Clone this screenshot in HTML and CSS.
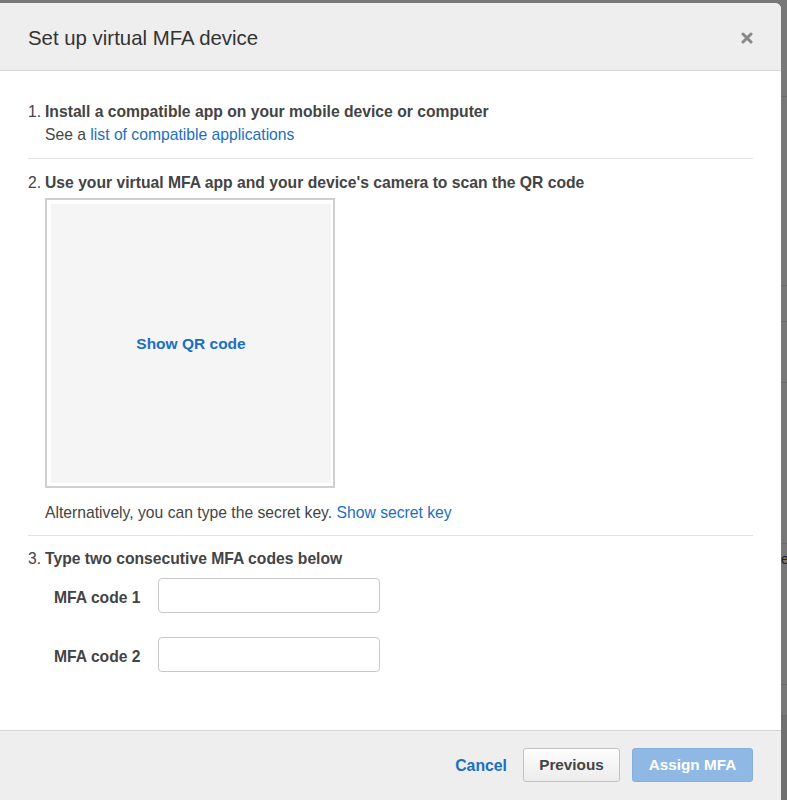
FILE: index.html
```html
<!DOCTYPE html>
<html>
<head>
<meta charset="utf-8">
<link rel="stylesheet" href="styles.css">
</head>
<body>
<div class="backdrop">
  <div class="bg-row r1"></div>
  <div class="bg-row r2"></div>
  <div class="bg-row r3"></div>
  <div class="bg-row r4"></div>
  <div class="bg-row r5"><span class="bg-text">key</span></div>
  <div class="bg-row r6"></div>
  <div class="bg-row r7 dark"></div>
</div>
<div class="dialog">
  <div class="dialog-header">
    <h1 class="dialog-title">Set up virtual MFA device</h1>
    <svg class="close" width="12" height="12" viewBox="0 0 12 12"><path d="M2 2 L10 10 M10 2 L2 10" stroke="#888" stroke-width="3" stroke-linecap="round"/></svg>
  </div>
  <div class="dialog-body">
    <div class="step">
      <div class="step-title"><span class="num">1.</span><span>Install a compatible app on your mobile device or computer</span></div>
      <div class="step-content"><div class="line">See a <a class="link">list of compatible applications</a></div></div>
    </div>
    <div class="sep"></div>
    <div class="step">
      <div class="step-title"><span class="num">2.</span><span>Use your virtual MFA app and your device's camera to scan the QR code</span></div>
      <div class="step-content">
        <div class="qr-box"><div class="qr-inner"><a class="link bold">Show QR code</a></div></div>
        <div class="line alt">Alternatively, you can type the secret key. <a class="link">Show secret key</a></div>
      </div>
    </div>
    <div class="sep sep2"></div>
    <div class="step">
      <div class="step-title"><span class="num">3.</span><span>Type two consecutive MFA codes below</span></div>
      <div class="step-content">
        <div class="form-row first"><label class="label">MFA code 1</label><div class="input"></div></div>
        <div class="form-row"><label class="label">MFA code 2</label><div class="input"></div></div>
      </div>
    </div>
  </div>
  <div class="dialog-footer">
    <a class="cancel">Cancel</a>
    <button class="btn btn-secondary">Previous</button>
    <button class="btn btn-primary">Assign MFA</button>
  </div>
</div>
</body>
</html>
```
FILE: styles.css
```css
html, body {
  margin: 0;
  padding: 0;
  height: 800px;
  overflow: hidden;
}
body {
  background: #787878;
  font-family: "Liberation Sans", Arial, sans-serif;
  color: #444;
  position: relative;
}
.backdrop {
  display: flex;
  flex-direction: column;
  padding-top: 96px;
}
.bg-row {
  border-top: 1px solid #6c6c6c;
  position: relative;
}
.r1 { height: 188px; }
.r2 { height: 35px; }
.r3 { height: 60px; }
.r4 { height: 160px; }
.r5 { height: 140px; }
.r6 { height: 30px; }
.r7 { height: 100px; }
.dark { background: #707070; }
.bg-text {
  position: absolute;
  left: 774px;
  top: 7px;
  font-size: 14px;
  color: #222;
}
.dialog {
  position: absolute;
  left: 0;
  top: 3px;
  width: 781px;
  height: 810px;
  background: #fff;
  border-radius: 0 6px 0 0;
  overflow: hidden;
  display: flex;
  flex-direction: column;
}
.dialog-header {
  height: 67px;
  background: #eeeeee;
  border-bottom: 1px solid #d5d5d5;
  display: flex;
  align-items: center;
  justify-content: space-between;
  padding: 0 28px 0 28px;
  flex-shrink: 0;
}
.dialog-title {
  margin: 0;
  font-size: 20.4px;
  font-weight: normal;
  color: #333;
  line-height: 24px;
  padding-top: 3px;
}
.close {
  margin-top: 2px;
}
.dialog-body {
  padding: 30px 28px 0 28px;
  height: 629px;
  flex-shrink: 0;
}
.step-title {
  display: flex;
  font-size: 15.7px;
  font-weight: bold;
  line-height: 22px;
}
.num {
  width: 17px;
  font-weight: normal;
}
.step-content {
  padding-left: 17px;
}
.line {
  font-size: 15.7px;
  line-height: 22px;
  margin-top: 1px;
}
.link {
  color: #1a6fc1;
  text-decoration: none;
}
.bold { font-weight: bold; }
.sep {
  border-top: 1px solid #e2e2e2;
  margin: 12px 0 13px 0;
}
.sep2 { margin: 11px 0 12px 0; }
.qr-box {
  margin-top: 4px;
  width: 286px;
  height: 286px;
  border: 2px solid #cfcfcf;
  padding: 0;
  background: #fff;
  display: flex;
}
.qr-inner {
  flex: 1;
  margin: 4px 2px 3px 4px;
  background: #f5f5f5;
  display: flex;
  align-items: center;
  justify-content: center;
  font-size: 15.5px;
  padding-top: 0;
}
.alt {
  margin-top: 14px;
}
.form-row {
  display: flex;
  align-items: center;
  padding-left: 9px;
  margin-top: 24px;
}
.form-row.first { margin-top: 8px; }
.label {
  width: 104px;
  font-size: 15.7px;
  font-weight: bold;
  color: #444;
  padding-top: 5px;
}
.input {
  width: 220px;
  height: 33px;
  border: 1px solid #c8c8c8;
  border-radius: 4px;
  background: #fff;
}
.dialog-footer {
  flex: 1;
  background: #eeeeee;
  border-top: 1px solid #d5d5d5;
  display: flex;
  align-items: flex-start;
  justify-content: flex-end;
  padding: 17px 28px 0 0;
}
.cancel {
  font-size: 15.8px;
  font-weight: bold;
  color: #1a6fc1;
  margin-right: 16px;
  line-height: 36px;
}
.btn {
  font-family: "Liberation Sans", Arial, sans-serif;
  font-size: 15.3px;
  font-weight: bold;
  height: 34px;
  border-radius: 3px;
  padding: 0;
}
.btn-secondary {
  width: 97px;
  background: linear-gradient(#fdfdfd, #ececec);
  border: 1px solid #c2c2c2;
  color: #444;
  margin-right: 12px;
}
.btn-primary {
  width: 121px;
  background: #8fb8e4;
  border: 1px solid #88b0dc;
  color: #fff;
}
```
